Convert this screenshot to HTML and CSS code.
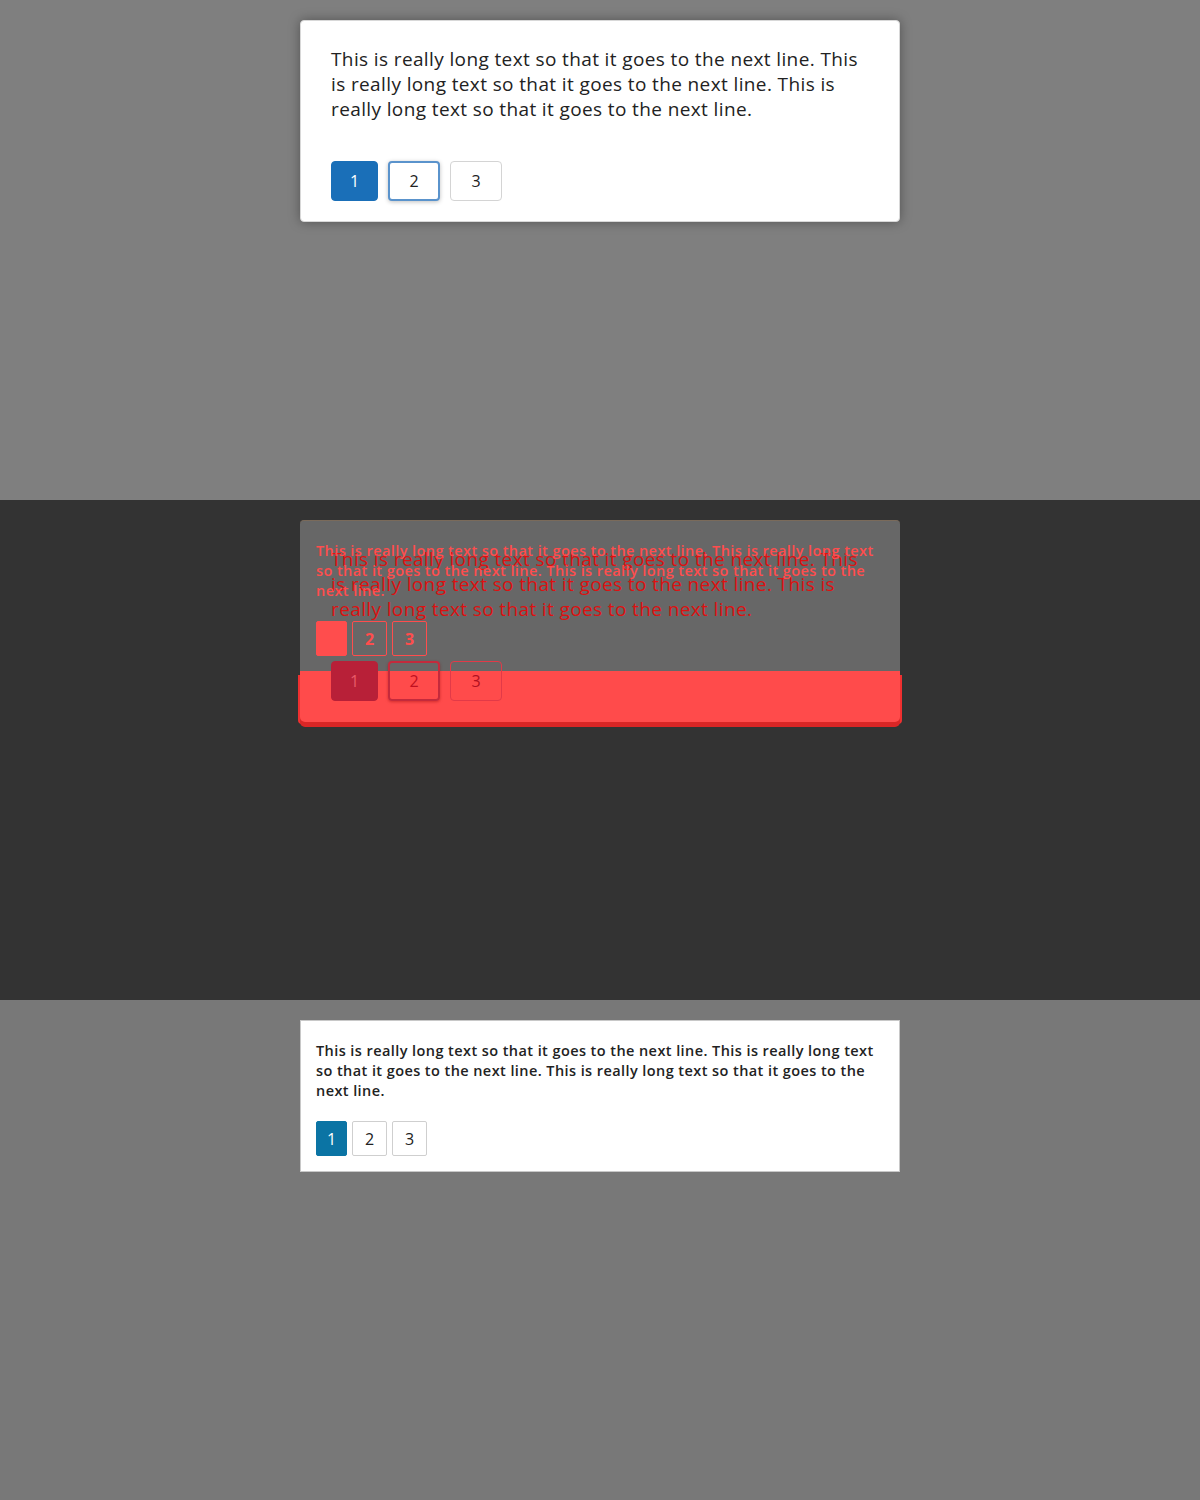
FILE: index.html
```html
<!DOCTYPE html>
<html>
<head>
<meta charset="utf-8">
<link rel="stylesheet" href="styles.css">
</head>
<body>
<section class="panel panel-actual">
  <div class="card card-lg">
    <p class="text-lg">This is really long text so that it goes to the next line. This is really long text so that it goes to the next line. This is really long text so that it goes to the next line.</p>
    <div class="pager pager-lg">
      <span class="pg pg-lg pg-lg-active">1</span>
      <span class="pg pg-lg pg-lg-focus">2</span>
      <span class="pg pg-lg">3</span>
    </div>
  </div>
</section>
<section class="panel panel-diff">
  <div class="diff">
    <div class="diff-gray"></div>
    <div class="diff-red"></div>
    <div class="diff-layer diff-lg">
      <p class="text-lg dl-text">This is really long text so that it goes to the next line. This is really long text so that it goes to the next line. This is really long text so that it goes to the next line.</p>
      <div class="pager pager-lg">
        <span class="pg pg-lg dl-active">1</span>
        <span class="pg pg-lg dl-focus">2</span>
        <span class="pg pg-lg dl-plain">3</span>
      </div>
    </div>
    <div class="diff-layer diff-sm">
      <p class="text-sm ds-text">This is really long text so that it goes to the next line. This is really long text so that it goes to the next line. This is really long text so that it goes to the next line.</p>
      <div class="pager pager-sm">
        <span class="pg pg-sm ds-active">1</span>
        <span class="pg pg-sm ds-plain">2</span>
        <span class="pg pg-sm ds-plain">3</span>
      </div>
    </div>
  </div>
</section>
<section class="panel panel-expected">
  <div class="card card-sm">
    <p class="text-sm">This is really long text so that it goes to the next line. This is really long text so that it goes to the next line. This is really long text so that it goes to the next line.</p>
    <div class="pager pager-sm">
      <span class="pg pg-sm pg-sm-active">1</span>
      <span class="pg pg-sm">2</span>
      <span class="pg pg-sm">3</span>
    </div>
  </div>
</section>
</body>
</html>
```
FILE: styles.css
```css
* { box-sizing: border-box; }
html, body { margin: 0; padding: 0; }
body { font-family: "Open Sans", "Noto Sans", sans-serif; color: #222; }
p { margin: 0; }

.panel {
  height: 500px;
  display: flex;
  flex-direction: column;
  align-items: center;
  padding-top: 20px;
}
.panel-actual { background: #7f7f7f; }
.panel-diff { background: #333333; }
.panel-expected { background: #787878; }

.card {
  width: 600px;
  background: #fff;
}
.card-lg {
  border: 1px solid #d8d8d8;
  border-radius: 4px;
  padding: 26px 30px 20px 30px;
  box-shadow: 0 0 12px rgba(0,0,0,0.35);
}
.card-sm {
  border: 1px solid #c8c8c8;
  padding: 20px 15px 15px 15px;
}

.text-lg {
  font-size: 19px;
  line-height: 25px;
  letter-spacing: 0.38px;
  color: #222;
  margin-bottom: 39px;
}
.text-sm {
  font-size: 14.5px;
  line-height: 20px;
  letter-spacing: 0.42px;
  font-weight: 600;
  color: #222;
  margin-bottom: 20px;
}

.pager { display: flex; }
.pager-lg { gap: 10px; }
.pager-sm { gap: 5px; }

.pg {
  display: flex;
  align-items: center;
  justify-content: center;
  background: #fff;
  color: #222;
}
.pg-lg {
  width: 52px;
  height: 40px;
  border: 1px solid #d4d4d4;
  border-radius: 4px;
  font-size: 16px;
}
.pg-lg-active {
  width: 47px;
  background: #1a6fb8;
  border-color: #1a6fb8;
  color: #fff;
}
.pg-lg-focus {
  border: 2px solid #5a93cc;
  box-shadow: 0 1px 4px rgba(0,0,0,0.25);
}
.pg-sm {
  width: 35px;
  height: 35px;
  border: 1px solid #cfcfcf;
  border-radius: 2px;
  font-size: 16px;
}
.pg-sm-active {
  width: 31px;
  background: #0b74a4;
  border-color: #0b74a4;
  color: #fff;
}

/* diff panel */
.diff {
  position: relative;
  width: 600px;
  height: 202px;
}
.diff-gray {
  position: absolute;
  left: 0; top: 0; right: 0;
  height: 151px;
  background: #676767;
  border-radius: 4px 4px 0 0;
  border-top: 1px solid #7a6a5a;
}
.diff-red {
  position: absolute;
  left: 0; right: 0; top: 151px;
  height: 51px;
  background: #ff4b4b;
  border-radius: 0 0 5px 5px;
  box-shadow: 0 5px 0 #d92626, -3px 3px 0 -1px #f03030, 3px 3px 0 -1px #f03030;
}
.diff-layer {
  position: absolute;
  left: 0; top: 0; right: 0;
}
.diff-lg { padding: 27px 31px 0 31px; }
.diff-sm { padding: 21px 16px 0 16px; }
.dl-text { color: #dd1111; }
.ds-text { color: #ff4d4d; }

.dl-active {
  width: 47px;
  background: #b82038;
  border-color: #b82038;
  color: #e85a68;
}
.dl-focus {
  background: transparent;
  border: 2px solid #c42a3c;
  color: #c01020;
  box-shadow: 0 1px 3px rgba(140,0,0,0.4);
}
.dl-plain {
  background: transparent;
  border: 1px solid #e23a48;
  color: #b01020;
}
.ds-active {
  width: 31px;
  background: #ff4d4d;
  border-color: #ff4d4d;
  color: #ff4d4d;
}
.ds-plain {
  background: transparent;
  border: 1px solid #ff4d4d;
  color: #ff4d4d;
  font-weight: 700;
}
```
